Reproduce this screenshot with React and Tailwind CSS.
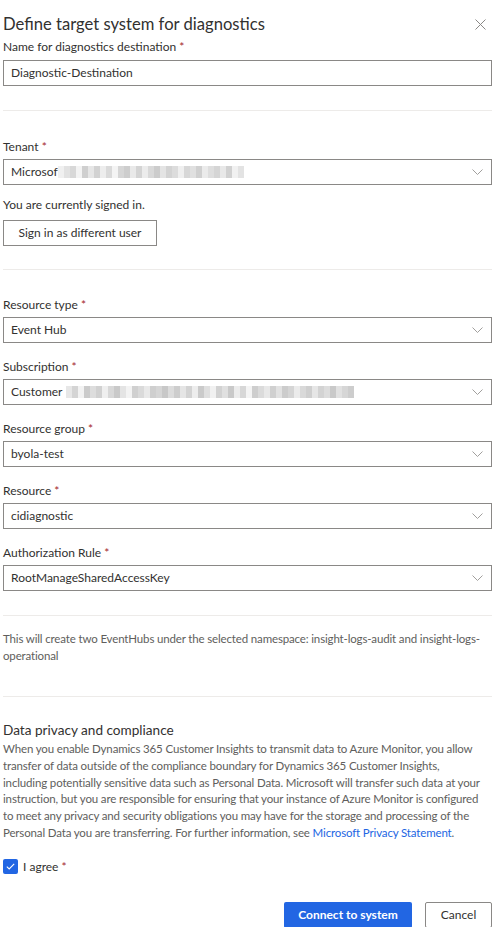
import React from 'react';

const font = { fontFamily: 'Lato, "Open Sans", Arial, sans-serif' };

function Chevron() {
  return (
    <svg width="11" height="6" viewBox="0 0 11 6" fill="none" className="shrink-0">
      <path d="M0.5 0.5 L5.5 5.5 L10.5 0.5" stroke="#a19f9d" strokeWidth="1" />
    </svg>
  );
}

function Blur({ shades }) {
  return (
    <div className="flex h-[12px] items-stretch">
      {shades.map((s, i) => (
        <div key={i} className="w-[6px]" style={{ backgroundColor: s }} />
      ))}
    </div>
  );
}

function Label({ children, className = '' }) {
  return (
    <div className={`text-[12px] leading-[16px] text-[#323130] ${className}`}>
      {children} <span className="text-[#a4262c]">*</span>
    </div>
  );
}

function Select({ children }) {
  return (
    <div className="mt-[4px] flex h-[26px] items-center justify-between border border-[#8a8886] pl-[7px] pr-[8px] text-[12px] text-[#323130]">
      <div className="flex items-center">{children}</div>
      <Chevron />
    </div>
  );
}

function Divider({ className = '' }) {
  return <div className={`h-px bg-[#edebe9] ${className}`} />;
}

const tenantShades = ['#f0f0f0', '#e2e2e2', '#d8d8d8', '#f3f3f3', '#cfcfcf', '#e6e6e6', '#d2d2d2', '#ededed', '#dadada', '#f4f4f4', '#d6d6d6', '#cdcdcd', '#e9e9e9', '#d4d4d4', '#ececec', '#d9d9d9', '#cccccc', '#e4e4e4', '#d3d3d3', '#dcdcdc', '#efefef', '#d7d7d7', '#e0e0e0', '#d0d0d0', '#ebebeb', '#dedede', '#d5d5d5', '#e8e8e8', '#d1d1d1', '#f1f1f1', '#e3e3e3'];
const subShades = ['#e7e7e7', '#d4d4d4', '#f2f2f2', '#cbcbcb', '#dddddd', '#d1d1d1', '#efefef', '#d8d8d8', '#c9c9c9', '#e4e4e4', '#f3f3f3', '#d0d0d0', '#dadada', '#e9e9e9', '#cfcfcf', '#d6d6d6', '#c8c8c8', '#dcdcdc', '#cdcdcd', '#e5e5e5', '#d3d3d3', '#ededed', '#cacaca', '#dfdfdf', '#f1f1f1', '#d2d2d2', '#e0e0e0', '#c9c9c9', '#ececec', '#d7d7d7', '#f4f4f4', '#cecece', '#dbdbdb', '#e8e8e8', '#d0d0d0', '#e2e2e2', '#cccccc', '#d5d5d5', '#ebebeb', '#d9d9d9', '#cfcfcf', '#e6e6e6', '#d3d3d3', '#dddddd', '#c9c9c9', '#e1e1e1', '#d6d6d6', '#cdcdcd'];

export default function App() {
  return (
    <div style={font} className="h-[927px] w-[497px] overflow-hidden bg-white pl-[3px] pr-[5px] text-[#323130]">
      <div className="flex items-center justify-between pt-[12px]">
        <h1 className="text-[16.6px] leading-[24px] text-[#323130]">Define target system for diagnostics</h1>
        <svg width="11" height="11" viewBox="0 0 11 11" className="mr-[6px]">
          <path d="M0.5 0.5 L10.5 10.5 M10.5 0.5 L0.5 10.5" stroke="#8a8886" strokeWidth="1" />
        </svg>
      </div>

      <Label className="mt-[3px]">Name for diagnostics destination</Label>
      <div className="mt-[5px] flex h-[26px] items-center border border-[#8a8886] pl-[7px] text-[12px]">
        Diagnostic-Destination
      </div>

      <Divider className="mt-[24px]" />

      <Label className="mt-[28px]">Tenant</Label>
      <Select>
        <span>Microsof</span>
        <Blur shades={tenantShades} />
      </Select>
      <div className="mt-[12px] text-[12px] leading-[16px] text-[#323130]">You are currently signed in.</div>
      <button className="mt-[7px] h-[26px] w-[154px] border border-[#8a8886] bg-white text-[12px] text-[#323130]">
        Sign in as different user
      </button>

      <Divider className="mt-[23px]" />

      <Label className="mt-[27px]">Resource type</Label>
      <Select>Event Hub</Select>
      <Label className="mt-[16px]">Subscription</Label>
      <Select>
        <span className="mr-[4px]">Customer</span>
        <Blur shades={subShades} />
      </Select>
      <Label className="mt-[16px]">Resource group</Label>
      <Select>byola-test</Select>
      <Label className="mt-[16px]">Resource</Label>
      <Select>cidiagnostic</Select>
      <Label className="mt-[16px]">Authorization Rule</Label>
      <Select>RootManageSharedAccessKey</Select>

      <Divider className="mt-[24px]" />

      <p className="mt-[15px] whitespace-nowrap text-[11.5px] leading-[16.5px] tracking-[-0.15px] text-[#605e5c]">
        This will create two EventHubs under the selected namespace: insight-logs-audit and insight-logs-
        <br />
        operational
      </p>

      <Divider className="mt-[32px]" />

      <h2 className="mt-[23px] text-[13.6px] leading-[20px] text-[#323130]">Data privacy and compliance</h2>
      <p className="mt-[1px] whitespace-nowrap text-[11.5px] leading-[16.8px] tracking-[-0.15px] text-[#605e5c]">
        When you enable Dynamics 365 Customer Insights to transmit data to Azure Monitor, you allow
        <br />
        transfer of data outside of the compliance boundary for Dynamics 365 Customer Insights,
        <br />
        including potentially sensitive data such as Personal Data. Microsoft will transfer such data at your
        <br />
        instruction, but you are responsible for ensuring that your instance of Azure Monitor is configured
        <br />
        to meet any privacy and security obligations you may have for the storage and processing of the
        <br />
        Personal Data you are transferring. For further information, see{' '}
        <span className="text-[#2266e3]">Microsoft Privacy Statement</span>.
      </p>

      <div className="mt-[17px] flex items-center gap-[5px]">
        <div className="flex h-[15px] w-[15px] items-center justify-center rounded-[2px] bg-[#2266e3]">
          <svg width="9" height="7" viewBox="0 0 9 7" fill="none">
            <path d="M0.8 3.6 L3.2 5.9 L8.2 0.8" stroke="white" strokeWidth="1.1" />
          </svg>
        </div>
        <span className="text-[12px] leading-[16px] text-[#323130]">
          I agree <span className="text-[#a4262c]">*</span>
        </span>
      </div>

      <div className="mt-[27px] flex justify-end gap-[13px]">
        <button className="h-[26px] w-[128px] rounded-[2px] bg-[#2266e3] text-[12px] font-bold text-white">
          Connect to system
        </button>
        <button className="h-[26px] w-[67px] rounded-[2px] border border-[#8a8886] bg-white text-[12px] text-[#323130]">
          Cancel
        </button>
      </div>
    </div>
  );
}
